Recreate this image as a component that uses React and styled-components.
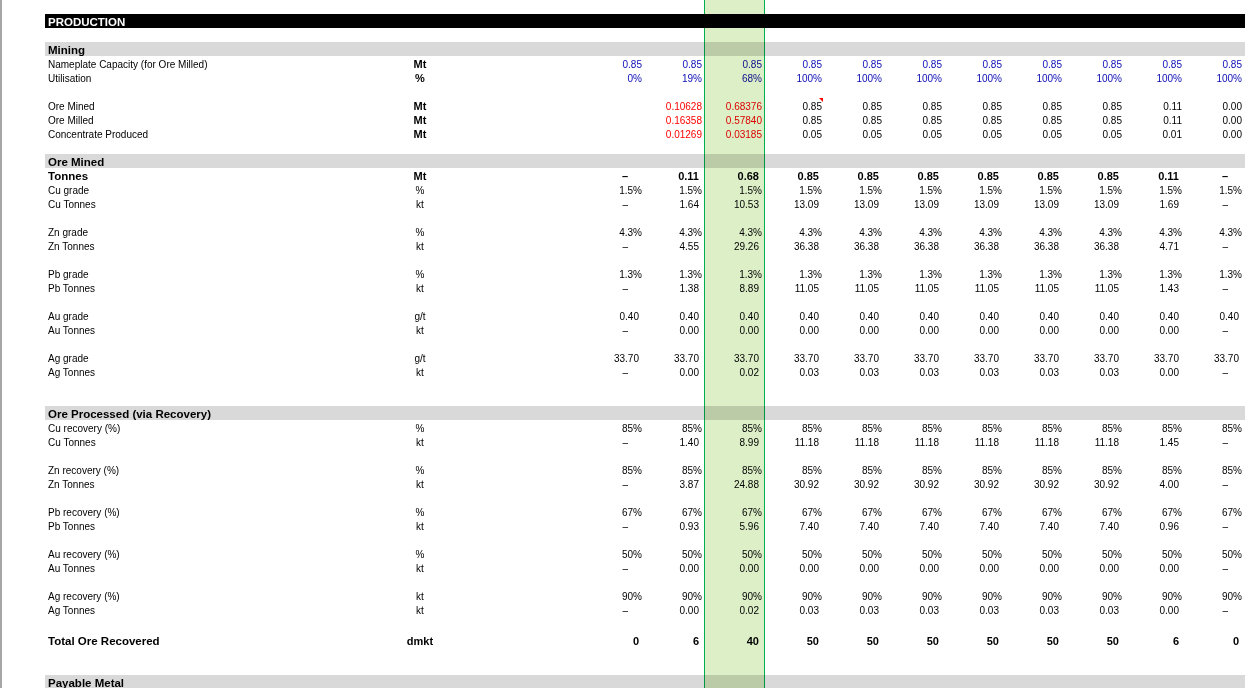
import React from 'react';
import styled, { createGlobalStyle } from 'styled-components';

const GlobalStyle = createGlobalStyle`
  html, body { margin: 0; padding: 0; background: #fff; overflow: hidden; }
  body { font-family: "Liberation Sans", Arial, sans-serif; }
`;

const INK = { blue: '#0c0cb4', red: '#ff0000', black: '#000000' };

const Page = styled.div`
  position: relative;
  width: 1248px;
  height: 688px;
  box-sizing: border-box;
  border-left: 2px solid #a6a6a6;
  padding-left: 43px;
  overflow: hidden;
  isolation: isolate;
`;

const Sheet = styled.div`
  width: 1200px;
  display: flex;
  flex-direction: column;
`;

const Row = styled.div`
  display: grid;
  grid-template-columns: 340px 70px 129px repeat(11, 60px) 1px;
  align-items: end;
  height: ${({ $h }) => $h}px;
  background: ${({ $variant }) =>
    $variant === 'title' ? '#000' : $variant === 'section' ? '#d9d9d9' : 'transparent'};
  color: ${({ $variant }) => ($variant === 'title' ? '#fff' : '#000')};
`;

const Cell = styled.div`
  position: relative;
  box-sizing: border-box;
  height: 14px;
  padding-top: 2px;
  line-height: 13px;
  white-space: nowrap;
  font-size: ${({ $bold }) => ($bold ? '11px' : '10px')};
  font-weight: ${({ $bold }) => ($bold ? 700 : 400)};
`;

const Label = styled(Cell)`
  padding-left: 3px;
  font-size: ${({ $bold }) => ($bold ? '11.5px' : '10px')};
`;

const Unit = styled(Cell)`
  text-align: center;
`;

const PAD = { plain: 2, pct: 2, num: 5, dash: 16 };

const Value = styled(Cell)`
  text-align: right;
  padding-right: ${({ $kind }) => PAD[$kind]}px;
  color: ${({ $ink }) => INK[$ink]};
`;

const CommentMark = styled.span`
  position: absolute;
  top: 0;
  right: 1px;
  width: 0;
  height: 0;
  border-top: 4px solid #ff0000;
  border-left: 4px solid transparent;
`;

const ColumnSelection = styled.div`
  position: absolute;
  top: 0;
  bottom: 0;
  left: 702px;
  width: 61px;
  box-sizing: border-box;
  border-left: 1px solid #00b050;
  border-right: 1px solid #00b050;
  pointer-events: none;
  background: #dcefc6;
  mix-blend-mode: multiply;
`;

const rep = (v, n) => Array(n).fill(v);
const D = '–';
const series = (a, b, c, mid, d, e) => [a, b, c, ...rep(mid, 6), d, e];

const rows = [
  { kind: 'blank' },
  { kind: 'title', label: 'PRODUCTION' },
  { kind: 'blank' },
  { kind: 'section', label: 'Mining' },
  { label: 'Nameplate Capacity (for Ore Milled)', unit: 'Mt', unitBold: true, ink: 'blue', fmt: 'plain', values: rep('0.85', 11) },
  { label: 'Utilisation', unit: '%', unitBold: true, ink: 'blue', fmt: 'plain', values: ['0%', '19%', '68%', ...rep('100%', 8)] },
  { kind: 'blank' },
  { label: 'Ore Mined', unit: 'Mt', unitBold: true, fmt: 'plain', red: [1, 2], comment: 3, values: series('', '0.10628', '0.68376', '0.85', '0.11', '0.00') },
  { label: 'Ore Milled', unit: 'Mt', unitBold: true, fmt: 'plain', red: [1, 2], values: series('', '0.16358', '0.57840', '0.85', '0.11', '0.00') },
  { label: 'Concentrate Produced', unit: 'Mt', unitBold: true, fmt: 'plain', red: [1, 2], values: series('', '0.01269', '0.03185', '0.05', '0.01', '0.00') },
  { kind: 'blank' },
  { kind: 'section', label: 'Ore Mined' },
  { label: 'Tonnes', bold: true, unit: 'Mt', unitBold: true, fmt: 'num', values: series(D, '0.11', '0.68', '0.85', '0.11', D) },
  { label: 'Cu grade', unit: '%', fmt: 'num', values: rep('1.5%', 11) },
  { label: 'Cu Tonnes', unit: 'kt', fmt: 'num', values: series(D, '1.64', '10.53', '13.09', '1.69', D) },
  { kind: 'blank' },
  { label: 'Zn grade', unit: '%', fmt: 'num', values: rep('4.3%', 11) },
  { label: 'Zn Tonnes', unit: 'kt', fmt: 'num', values: series(D, '4.55', '29.26', '36.38', '4.71', D) },
  { kind: 'blank' },
  { label: 'Pb grade', unit: '%', fmt: 'num', values: rep('1.3%', 11) },
  { label: 'Pb Tonnes', unit: 'kt', fmt: 'num', values: series(D, '1.38', '8.89', '11.05', '1.43', D) },
  { kind: 'blank' },
  { label: 'Au grade', unit: 'g/t', fmt: 'num', values: rep('0.40', 11) },
  { label: 'Au Tonnes', unit: 'kt', fmt: 'num', values: series(D, '0.00', '0.00', '0.00', '0.00', D) },
  { kind: 'blank' },
  { label: 'Ag grade', unit: 'g/t', fmt: 'num', values: rep('33.70', 11) },
  { label: 'Ag Tonnes', unit: 'kt', fmt: 'num', values: series(D, '0.00', '0.02', '0.03', '0.00', D) },
  { kind: 'blank' },
  { kind: 'blank' },
  { kind: 'section', label: 'Ore Processed (via Recovery)' },
  { label: 'Cu recovery (%)', unit: '%', fmt: 'num', values: rep('85%', 11) },
  { label: 'Cu Tonnes', unit: 'kt', fmt: 'num', values: series(D, '1.40', '8.99', '11.18', '1.45', D) },
  { kind: 'blank' },
  { label: 'Zn recovery (%)', unit: '%', fmt: 'num', values: rep('85%', 11) },
  { label: 'Zn Tonnes', unit: 'kt', fmt: 'num', values: series(D, '3.87', '24.88', '30.92', '4.00', D) },
  { kind: 'blank' },
  { label: 'Pb recovery (%)', unit: '%', fmt: 'num', values: rep('67%', 11) },
  { label: 'Pb Tonnes', unit: 'kt', fmt: 'num', values: series(D, '0.93', '5.96', '7.40', '0.96', D) },
  { kind: 'blank' },
  { label: 'Au recovery (%)', unit: '%', fmt: 'num', values: rep('50%', 11) },
  { label: 'Au Tonnes', unit: 'kt', fmt: 'num', values: series(D, '0.00', '0.00', '0.00', '0.00', D) },
  { kind: 'blank' },
  { label: 'Ag recovery (%)', unit: 'kt', fmt: 'num', values: rep('90%', 11) },
  { label: 'Ag Tonnes', unit: 'kt', fmt: 'num', values: series(D, '0.00', '0.02', '0.03', '0.00', D) },
  { kind: 'blank', h: 17 },
  { label: 'Total Ore Recovered', bold: true, unit: 'dmkt', unitBold: true, fmt: 'num', values: series('0', '6', '40', '50', '6', '0') },
  { kind: 'blank' },
  { kind: 'blank' },
  { kind: 'section', label: 'Payable Metal' },
];

function kindOf(v, fmt) {
  if (v === D) return 'dash';
  if (v.endsWith('%')) return 'pct';
  return fmt;
}

function SheetRow({ row }) {
  const h = row.h || 14;
  if (row.kind === 'blank') return <Row $h={h} />;
  if (row.kind === 'title' || row.kind === 'section') {
    return (
      <Row $h={h} $variant={row.kind}>
        <Label $bold>{row.label}</Label>
      </Row>
    );
  }
  return (
    <Row $h={h}>
      <Label $bold={row.bold}>{row.label}</Label>
      <Unit $bold={row.unitBold}>{row.unit}</Unit>
      <div />
      {row.values.map((v, i) => (
        <Value
          key={i}
          $bold={row.bold}
          $kind={kindOf(v, row.fmt)}
          $ink={row.red && row.red.includes(i) ? 'red' : row.ink || 'black'}
        >
          {v}
          {row.comment === i && <CommentMark />}
        </Value>
      ))}
    </Row>
  );
}

export default function App() {
  return (
    <>
      <GlobalStyle />
      <Page>
        <Sheet>
          {rows.map((r, i) => (
            <SheetRow key={i} row={r} />
          ))}
        </Sheet>
        <ColumnSelection />
      </Page>
    </>
  );
}
